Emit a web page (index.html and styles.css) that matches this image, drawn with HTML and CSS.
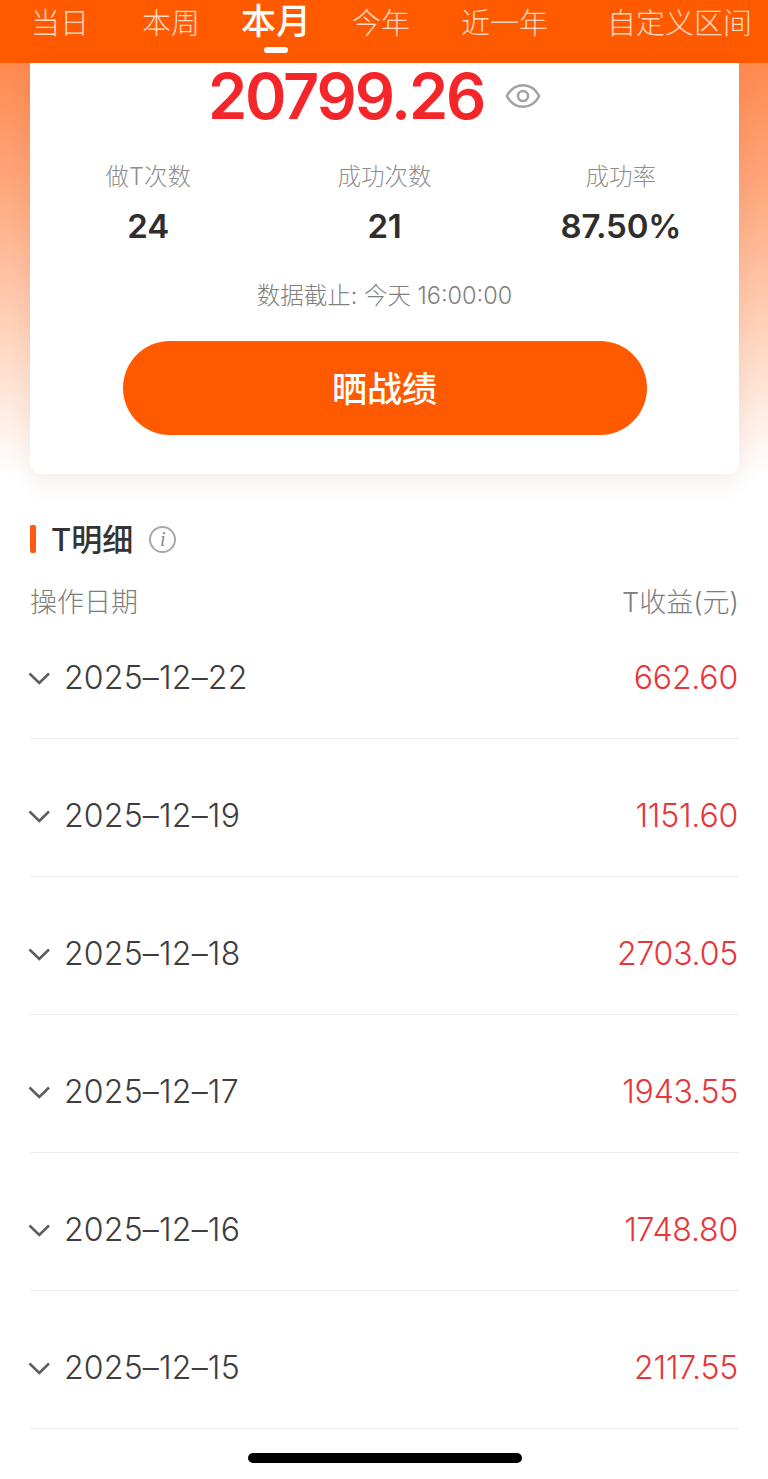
FILE: index.html
```html
<!DOCTYPE html>
<html lang="zh-CN">
  <head>
    <meta charset="UTF-8" />
    <meta name="viewport" content="width=device-width, initial-scale=1.0" />
    <title>T明细</title>
    <link rel="stylesheet" href="styles.css">
  </head>

  <body>
    <div class="tabs">
      <span class="tab tab-day">当日</span>
      <span class="tab tab-week">本周</span>
      <span class="tab tab-month active">本月</span>
      <span class="tab tab-year">今年</span>
      <span class="tab tab-last">近一年</span>
      <span class="tab tab-custom">自定义区间</span>
    </div>

    <div class="hero">
      <div class="summary-card">
        <div class="total-row">
          <span class="total">20799.26</span>
          <svg class="eye" viewBox="0 0 36 26" width="36" height="26" fill="none" stroke="#a3a3a3" stroke-width="2.6">
            <path d="M1.8 13C5.5 6 11 2.2 18 2.2S30.500 6 34.200 13C30.500 20 25 23.800 18 23.800S5.500 20 1.800 13Z" />
            <circle cx="18" cy="13" r="5" />
          </svg>
        </div>

        <div class="stats">
          <div class="stat">
            <div class="stat-label">做T次数</div>
            <div class="stat-value">24</div>
          </div>
          <div class="stat">
            <div class="stat-label">成功次数</div>
            <div class="stat-value">21</div>
          </div>
          <div class="stat">
            <div class="stat-label">成功率</div>
            <div class="stat-value">87.50%</div>
          </div>
        </div>

        <div class="as-of">数据截止: 今天 16:00:00</div>
        <button class="share-button">晒战绩</button>
      </div>
    </div>

    <div class="detail">
      <div class="detail-title">
        <span class="title-bar"></span>
        <h2>T明细</h2>
        <span class="info-icon">i</span>
      </div>

      <div class="detail-head">
        <span>操作日期</span>
        <span>T收益(元)</span>
      </div>

      <div class="detail-row">
        <span class="row-date"><svg class="chevron" viewBox="0 0 22 14" width="22" height="14"><path d="M1.500 2.500L11.250 12L21 2.500" /></svg>2025–12–22</span>
        <span class="row-amount">662.60</span>
      </div>
      <div class="detail-row">
        <span class="row-date"><svg class="chevron" viewBox="0 0 22 14" width="22" height="14"><path d="M1.500 2.500L11.250 12L21 2.500" /></svg>2025–12–19</span>
        <span class="row-amount">1151.60</span>
      </div>
      <div class="detail-row">
        <span class="row-date"><svg class="chevron" viewBox="0 0 22 14" width="22" height="14"><path d="M1.500 2.500L11.250 12L21 2.500" /></svg>2025–12–18</span>
        <span class="row-amount">2703.05</span>
      </div>
      <div class="detail-row">
        <span class="row-date"><svg class="chevron" viewBox="0 0 22 14" width="22" height="14"><path d="M1.500 2.500L11.250 12L21 2.500" /></svg>2025–12–17</span>
        <span class="row-amount">1943.55</span>
      </div>
      <div class="detail-row">
        <span class="row-date"><svg class="chevron" viewBox="0 0 22 14" width="22" height="14"><path d="M1.500 2.500L11.250 12L21 2.500" /></svg>2025–12–16</span>
        <span class="row-amount">1748.80</span>
      </div>
      <div class="detail-row">
        <span class="row-date"><svg class="chevron" viewBox="0 0 22 14" width="22" height="14"><path d="M1.500 2.500L11.250 12L21 2.500" /></svg>2025–12–15</span>
        <span class="row-amount">2117.55</span>
      </div>
    </div>

    <div class="home-indicator"></div>
  </body>
</html>
```

FILE: styles.css
```css
body {
  font-family: Inter, "Noto Sans CJK SC", sans-serif;
  margin: 0;
  height: 1479px;
  overflow: hidden;
  background-color: #fff;
  position: relative;
}

.tabs {
  display: flex;
  height: 63px;
  padding-left: 31px;
  background-color: #ff5a00;
  box-sizing: border-box;
}

.tab {
  font-size: 29px;
  line-height: 48px;
  color: #ffd9c4;
  white-space: nowrap;
  font-weight: 300;
}

.tab-week {
  margin-left: 53px;
}

.tab-month {
  margin-left: 41px;
}

.tab-year {
  margin-left: 41px;
}

.tab-last {
  margin-left: 51px;
}

.tab-custom {
  margin-left: 59px;
}

.tab.active {
  position: relative;
  font-size: 35px;
  line-height: 42px;
  font-weight: 500;
  color: #fff;
}

.tab.active::after {
  content: "";
  position: absolute;
  left: 23px;
  top: 47px;
  width: 24px;
  height: 6px;
  border-radius: 3px;
  background-color: #fff;
}

.hero {
  padding: 0 29px 0 30px;
  height: 411px;
  background: linear-gradient(#ff8a50 0%, #ffa77c 30%, #ffd3bb 65%, #fff 100%);
}

.summary-card {
  height: 411px;
  background-color: #fff;
  border-radius: 0 0 12px 12px;
  box-shadow: 0 8px 24px rgba(120, 60, 20, 0.09);
  box-sizing: border-box;
  text-align: center;
}

.total-row {
  display: flex;
  justify-content: center;
  align-items: center;
  height: 66px;
  padding-right: 20px;
}

.total {
  font-size: 63px;
  font-weight: 600;
  color: #f5262a;
  letter-spacing: -2.2px;
}

.eye {
  margin-left: 21px;
}

.stats {
  display: flex;
  margin-top: 32px;
}

.stat {
  flex: 1;
}

.stat-label {
  font-size: 23.500px;
  line-height: 32px;
  color: #8f8f8f;
  font-weight: 300;
}

.stat-value {
  margin-top: 14px;
  font-size: 33px;
  line-height: 38px;
  font-weight: 600;
  color: #2e2e2e;
  letter-spacing: -0.2px;
}

.as-of {
  margin-top: 35px;
  font-size: 23.500px;
  line-height: 32px;
  color: #808080;
  font-weight: 300;
}

.share-button {
  display: block;
  width: 524px;
  height: 94px;
  margin: 29px auto 0;
  padding: 0 0 4px;
  border: none;
  border-radius: 47px;
  background-color: #ff5a00;
  color: #fff;
  font-family: inherit;
  font-size: 35px;
  font-weight: 500;
}

.detail {
  padding: 0 29px 0 30px;
}

.detail-title {
  display: flex;
  align-items: center;
  margin-top: 47px;
  height: 36px;
}

.title-bar {
  width: 6px;
  height: 28px;
  border-radius: 2px;
  background-color: #ff5a14;
}

.detail-title h2 {
  margin: -3px 0 0 15px;
  font-size: 31px;
  font-weight: 500;
  color: #333;
}

.info-icon {
  display: flex;
  justify-content: center;
  align-items: center;
  width: 23px;
  height: 23px;
  margin-left: 16px;
  border: 2px solid #a8a8a8;
  border-radius: 50%;
  font-family: "Liberation Serif", serif;
  font-style: italic;
  font-size: 20px;
  color: #8c8c8c;
}

.detail-head {
  display: flex;
  justify-content: space-between;
  margin-top: 28px;
  font-size: 27px;
  line-height: 36px;
  color: #7d7d7d;
  font-weight: 300;
}

.detail-row {
  display: flex;
  justify-content: space-between;
  padding: 59px 0 42px;
  font-size: 32px;
  line-height: 36px;
  font-weight: 300;
  border-bottom: 1px solid #ececec;
}

.detail-head + .detail-row {
  padding-top: 39px;
}

.row-date {
  display: flex;
  align-items: center;
  color: #3d3d3d;
  letter-spacing: 0.2px;
}

.chevron {
  margin: 0 14px 0 -2px;
  fill: none;
  stroke: #5e5e5e;
  stroke-width: 2.6;
}

.row-amount {
  margin-right: 1px;
  color: #e8353a;
  letter-spacing: -0.2px;
}

.home-indicator {
  position: absolute;
  left: 248px;
  top: 1453px;
  width: 274px;
  height: 10px;
  border-radius: 5px;
  background-color: #000;
}
```
